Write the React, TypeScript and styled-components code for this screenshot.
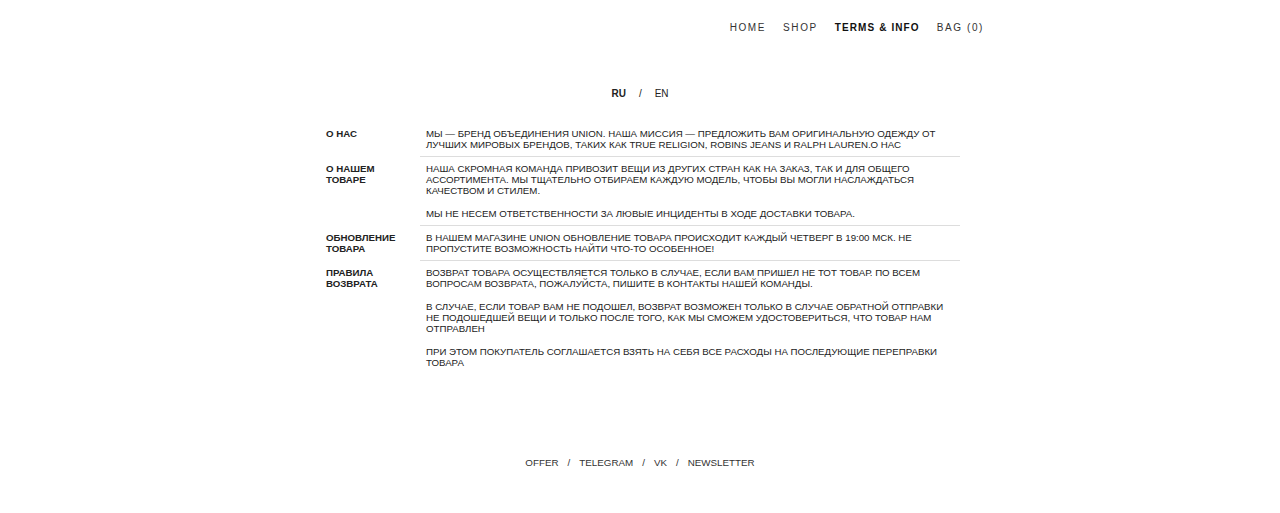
import React from "react";
import styled, { createGlobalStyle } from "styled-components";

const Global = createGlobalStyle`
  html, body { margin: 0; padding: 0; background: #fff; }
  body { font-family: "Liberation Sans", Arial, sans-serif; color: #222; }
  * { box-sizing: border-box; }
`;

const Page = styled.div`
  width: 1280px;
  min-height: 513px;
  display: flex;
  flex-direction: column;
  align-items: center;
`;

const Header = styled.header`
  width: 100%;
  height: 54px;
  display: flex;
  justify-content: flex-end;
  align-items: center;
  padding-right: 296px;
`;

const Nav = styled.nav`
  display: flex;
  gap: 17px;
`;

const NavItem = styled.a<{ $active?: boolean }>`
  font-size: 10px;
  letter-spacing: ${(p) => (p.$active ? "1.1px" : "1.6px")};
  color: ${(p) => (p.$active ? "#111" : "#333")};
  font-weight: ${(p) => (p.$active ? 700 : 400)};
  text-decoration: none;
  text-transform: uppercase;
`;

const Lang = styled.div`
  margin-top: 34px;
  display: flex;
  gap: 13px;
  font-size: 10px;
  color: #222;
`;

const LangItem = styled.span<{ $active?: boolean }>`
  font-weight: ${(p) => (p.$active ? 700 : 400)};
`;

const Table = styled.div`
  margin-top: 23px;
  width: 634px;
  margin-left: 6px;
  display: flex;
  flex-direction: column;
`;

const Row = styled.div`
  display: flex;
`;

const Label = styled.div`
  width: 100px;
  flex-shrink: 0;
  padding: 6px 18px 6px 0;
  font-size: 9.7px;
  line-height: 11px;
  font-weight: 700;
  color: #222;
  text-transform: uppercase;
`;

const Body = styled.div<{ $last?: boolean }>`
  flex: 1;
  padding: 6px 10px 6px 6px;
  margin-left: -6px;
  border-bottom: ${(p) => (p.$last ? "none" : "1px solid #ddd")};
`;

const Para = styled.p`
  margin: 0 0 12px;
  font-size: 9.7px;
  line-height: 11px;
  color: #222;
  text-transform: uppercase;
  &:last-child { margin-bottom: 0; }
`;

const Footer = styled.footer`
  margin-top: 83px;
  display: flex;
  gap: 9px;
  font-size: 9.8px;
  color: #333;
`;

const FootLink = styled.a`
  color: #333;
  text-decoration: none;
`;

const rows: { label: string; paras: string[] }[] = [
  {
    label: "О нас",
    paras: [
      "Мы — бренд объединения UNION. Наша миссия — предложить вам оригинальную одежду от лучших мировых брендов, таких как True Religion, Robins Jeans и Ralph Lauren.О нас",
    ],
  },
  {
    label: "О нашем товаре",
    paras: [
      "Наша скромная команда привозит вещи из других стран как на заказ, так и для общего ассортимента. Мы тщательно отбираем каждую модель, чтобы вы могли наслаждаться качеством и стилем.",
      "Мы не несем ответственности за лювые инциденты в ходе доставки товара.",
    ],
  },
  {
    label: "Обновление товара",
    paras: [
      "В нашем магазине UNION обновление товара происходит каждый четверг в 19:00 мск. Не пропустите возможность найти что-то особенное!",
    ],
  },
  {
    label: "Правила возврата",
    paras: [
      "Возврат товара осуществляется только в случае, если вам пришел не тот товар. По всем вопросам возврата, пожалуйста, пишите в контакты нашей команды.",
      "В случае, если товар вам не подошел, возврат возможен только в случае обратной отправки не подошедшей вещи и только после того, как мы сможем удостовериться, что товар нам отправлен",
      "При этом покупатель соглашается взять на себя все расходы на последующие переправки товара",
    ],
  },
];

export default function App() {
  return (
    <Page>
      <Global />
      <Header>
        <Nav>
          <NavItem href="#">Home</NavItem>
          <NavItem href="#">Shop</NavItem>
          <NavItem href="#" $active>Terms &amp; Info</NavItem>
          <NavItem href="#">Bag (0)</NavItem>
        </Nav>
      </Header>
      <Lang>
        <LangItem $active>RU</LangItem>
        <LangItem>/</LangItem>
        <LangItem>EN</LangItem>
      </Lang>
      <Table>
        {rows.map((r, i) => (
          <Row key={r.label}>
            <Label>{r.label}</Label>
            <Body $last={i === rows.length - 1}>
              {r.paras.map((p) => (
                <Para key={p}>{p}</Para>
              ))}
            </Body>
          </Row>
        ))}
      </Table>
      <Footer>
        <FootLink href="#">OFFER</FootLink>
        <span>/</span>
        <FootLink href="#">TELEGRAM</FootLink>
        <span>/</span>
        <FootLink href="#">VK</FootLink>
        <span>/</span>
        <FootLink href="#">NEWSLETTER</FootLink>
      </Footer>
    </Page>
  );
}
